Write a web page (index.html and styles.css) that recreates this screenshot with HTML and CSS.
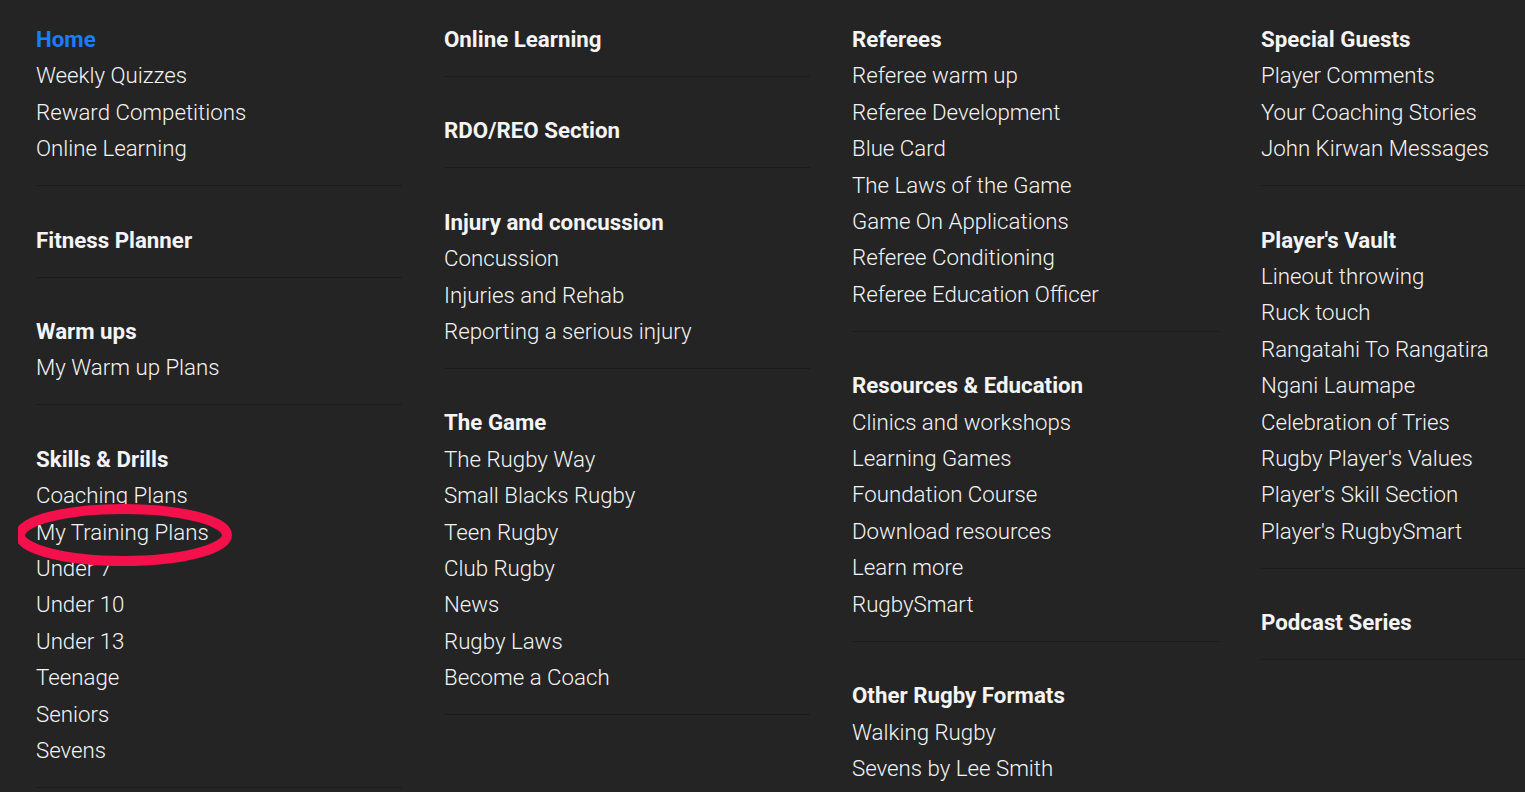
FILE: index.html
```html
<!DOCTYPE html>
<html lang="en">
<head>
<meta charset="utf-8">
<title>Menu</title>
<link rel="stylesheet" href="styles.css">
</head>
<body>
<nav class="mega">
  <div class="col">
    <section class="group">
      <a class="head active" href="#">Home</a>
      <a href="#">Weekly Quizzes</a>
      <a href="#">Reward Competitions</a>
      <a href="#">Online Learning</a>
    </section>
    <section class="group">
      <a class="head" href="#">Fitness Planner</a>
    </section>
    <section class="group">
      <a class="head" href="#">Warm ups</a>
      <a href="#">My Warm up Plans</a>
    </section>
    <section class="group">
      <a class="head" href="#">Skills &amp; Drills</a>
      <a href="#">Coaching Plans</a>
      <a class="marked" href="#">My Training Plans
        <svg class="circle" width="230" height="70" viewBox="0 0 230 70" aria-hidden="true"><ellipse cx="105.5" cy="35" rx="103.5" ry="26" fill="none" stroke="#f3104b" stroke-width="10"/></svg>
      </a>
      <a href="#">Under 7</a>
      <a href="#">Under 10</a>
      <a href="#">Under 13</a>
      <a href="#">Teenage</a>
      <a href="#">Seniors</a>
      <a href="#">Sevens</a>
    </section>
  </div>
  <div class="col">
    <section class="group">
      <a class="head" href="#">Online Learning</a>
    </section>
    <section class="group">
      <a class="head" href="#">RDO/REO Section</a>
    </section>
    <section class="group">
      <a class="head" href="#">Injury and concussion</a>
      <a href="#">Concussion</a>
      <a href="#">Injuries and Rehab</a>
      <a href="#">Reporting a serious injury</a>
    </section>
    <section class="group">
      <a class="head" href="#">The Game</a>
      <a href="#">The Rugby Way</a>
      <a href="#">Small Blacks Rugby</a>
      <a href="#">Teen Rugby</a>
      <a href="#">Club Rugby</a>
      <a href="#">News</a>
      <a href="#">Rugby Laws</a>
      <a href="#">Become a Coach</a>
    </section>
  </div>
  <div class="col">
    <section class="group">
      <a class="head" href="#">Referees</a>
      <a href="#">Referee warm up</a>
      <a href="#">Referee Development</a>
      <a href="#">Blue Card</a>
      <a href="#">The Laws of the Game</a>
      <a href="#">Game On Applications</a>
      <a href="#">Referee Conditioning</a>
      <a href="#">Referee Education Officer</a>
    </section>
    <section class="group">
      <a class="head" href="#">Resources &amp; Education</a>
      <a href="#">Clinics and workshops</a>
      <a href="#">Learning Games</a>
      <a href="#">Foundation Course</a>
      <a href="#">Download resources</a>
      <a href="#">Learn more</a>
      <a href="#">RugbySmart</a>
    </section>
    <section class="group">
      <a class="head" href="#">Other Rugby Formats</a>
      <a href="#">Walking Rugby</a>
      <a href="#">Sevens by Lee Smith</a>
    </section>
  </div>
  <div class="col">
    <section class="group">
      <a class="head" href="#">Special Guests</a>
      <a href="#">Player Comments</a>
      <a href="#">Your Coaching Stories</a>
      <a href="#">John Kirwan Messages</a>
    </section>
    <section class="group">
      <a class="head" href="#">Player's Vault</a>
      <a href="#">Lineout throwing</a>
      <a href="#">Ruck touch</a>
      <a href="#">Rangatahi To Rangatira</a>
      <a href="#">Ngani Laumape</a>
      <a href="#">Celebration of Tries</a>
      <a href="#">Rugby Player's Values</a>
      <a href="#">Player's Skill Section</a>
      <a href="#">Player's RugbySmart</a>
    </section>
    <section class="group">
      <a class="head" href="#">Podcast Series</a>
    </section>
  </div>
</nav>
</body>
</html>
```
FILE: styles.css
```css
html, body {
  margin: 0;
  padding: 0;
  background: #242424;
  height: 100%;
  overflow: hidden;
}

body {
  font-family: Roboto, "Liberation Sans", sans-serif;
  color: #f4f4f4;
}

.mega {
  display: grid;
  grid-template-columns: 366px 366px 367px 366px;
  column-gap: 42px;
  padding: 21px 0 0 36px;
  width: max-content;
}

.col {
  display: flex;
  flex-direction: column;
}

.group {
  display: flex;
  flex-direction: column;
  padding-bottom: 18.5px;
  border-bottom: 1px solid #1b1b1b;
}

.group + .group {
  margin-top: 35.5px;
}

.group a {
  display: block;
  font-size: 22.25px;
  font-weight: 300;
  line-height: 36.4px;
  color: #f4f4f4;
  text-decoration: none;
  white-space: nowrap;
}

.group a.head {
  font-weight: 700;
  font-size: 22.3px;
}

.group a.active {
  color: #1a7dff;
}

.marked {
  position: relative;
}

.circle {
  position: absolute;
  left: -18px;
  top: -14px;
  pointer-events: none;
}
```
